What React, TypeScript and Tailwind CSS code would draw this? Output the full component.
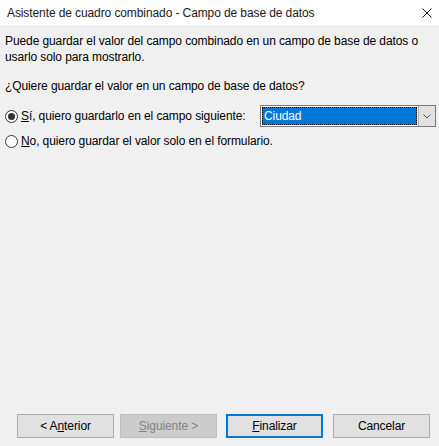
import { useState } from "react";

function Radio({ checked }: { checked: boolean }) {
  return (
    <span className="flex h-[13px] w-[13px] shrink-0 items-center justify-center rounded-full border border-[#333333] bg-white">
      {checked && <span className="h-[7px] w-[7px] rounded-full bg-[#333333]" />}
    </span>
  );
}

function WinButton({
  children,
  disabled,
  primary,
  className = "",
}: {
  children: React.ReactNode;
  disabled?: boolean;
  primary?: boolean;
  className?: string;
}) {
  const look = disabled
    ? "border-[#bfbfbf] bg-[#cccccc] text-[#838383]"
    : primary
      ? "border-2 border-[#0078d7] bg-[#e1e1e1] text-black"
      : "border-[#adadad] bg-[#e1e1e1] text-black";
  return (
    <button
      className={`flex h-[24px] w-[97px] items-center justify-center border text-[12px] ${look} ${className}`}
    >
      {children}
    </button>
  );
}

export default function App() {
  const [choice, setChoice] = useState("si");

  return (
    <div
      className="flex h-[446px] w-[439px] flex-col overflow-hidden bg-[#f0f0f0] text-[12px] tracking-[-0.1px] text-black"
      style={{ fontFamily: '"Liberation Sans", Arial, sans-serif' }}
    >
      <div className="flex h-[25px] shrink-0 items-center justify-between bg-white pl-[7px] pr-[6px]">
        <span className="text-[#1a1a1a]">Asistente de cuadro combinado - Campo de base de datos</span>
        <svg width="10" height="10" viewBox="0 0 10 10" className="mr-[1px]">
          <path d="M0.5 0.5 L9.5 9.5 M9.5 0.5 L0.5 9.5" stroke="#111" strokeWidth="1" />
        </svg>
      </div>

      <div className="flex flex-1 flex-col pl-[5px] pt-[8px]">
        <p className="leading-[16px]">
          Puede guardar el valor del campo combinado en un campo de base de datos o
          <br />
          usarlo solo para mostrarlo.
        </p>

        <p className="mt-[13px] leading-[16px]">¿Quiere guardar el valor en un campo de base de datos?</p>

        <div className="mt-[11px] flex h-[22px] items-center" onClick={() => setChoice("si")}>
          <Radio checked={choice === "si"} />
          <span className="ml-[3px]">
            <u>S</u>í, quiero guardarlo en el campo siguiente:
          </span>
          <div className="ml-auto mr-[3px] flex h-[22px] w-[176px] border border-[#7a7a7a] bg-white">
            <div className="flex flex-1 items-center p-[1px]">
              <div className="flex h-full w-full items-center border border-dotted border-black bg-[#0078d7] pl-[1px] text-white">
                Ciudad
              </div>
            </div>
            <div className="flex w-[17px] items-center justify-center border-l border-[#adadad] bg-[#e1e1e1]">
              <svg width="8" height="5" viewBox="0 0 8 5">
                <path d="M0.5 0.5 L4 4 L7.5 0.5" fill="none" stroke="#555" strokeWidth="1" />
              </svg>
            </div>
          </div>
        </div>

        <div className="mt-[4px] flex h-[20px] items-center" onClick={() => setChoice("no")}>
          <Radio checked={choice === "no"} />
          <span className="ml-[3px]">
            <u>N</u>o, quiero guardar el valor solo en el formulario.
          </span>
        </div>

        <div className="mb-[8px] mt-auto flex">
          <WinButton className="ml-[12px]">
            &lt; A<u>n</u>terior
          </WinButton>
          <WinButton disabled className="ml-[6px]">
            <u>S</u>iguiente &gt;
          </WinButton>
          <WinButton primary className="ml-[9px]">
            <u>F</u>inalizar
          </WinButton>
          <WinButton className="ml-[10px]">Cancelar</WinButton>
        </div>
      </div>
    </div>
  );
}
